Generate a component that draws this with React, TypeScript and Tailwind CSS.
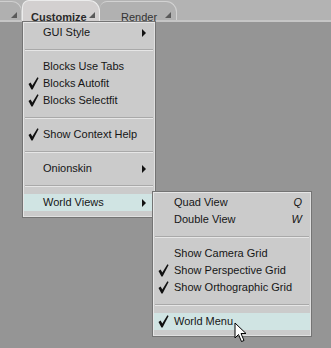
import type { ReactNode } from "react";

type Item =
  | { kind: "item"; label: string; checked?: boolean; sub?: boolean; hot?: boolean; key?: string }
  | { kind: "sep" };

const mainItems: Item[] = [
  { kind: "item", label: "GUI Style", sub: true },
  { kind: "sep" },
  { kind: "item", label: "Blocks Use Tabs" },
  { kind: "item", label: "Blocks Autofit", checked: true },
  { kind: "item", label: "Blocks Selectfit", checked: true },
  { kind: "sep" },
  { kind: "item", label: "Show Context Help", checked: true },
  { kind: "sep" },
  { kind: "item", label: "Onionskin", sub: true },
  { kind: "sep" },
  { kind: "item", label: "World Views", sub: true, hot: true },
];

const viewItems: Item[] = [
  { kind: "item", label: "Quad View", key: "Q" },
  { kind: "item", label: "Double View", key: "W" },
  { kind: "sep" },
  { kind: "item", label: "Show Camera Grid" },
  { kind: "item", label: "Show Perspective Grid", checked: true },
  { kind: "item", label: "Show Orthographic Grid", checked: true },
  { kind: "sep" },
  { kind: "item", label: "World Menu", checked: true, hot: true },
];

function Check() {
  return (
    <svg width="11" height="13" viewBox="0 0 11 13" className="block">
      <path d="M0.5 7 L2.6 5.6 L4.3 8.6 L9.4 0.3 L10.6 1.1 L4.6 12.4 L3.4 12.4 Z" fill="#111" />
    </svg>
  );
}

function Corner() {
  return <div className="h-0 w-0 border-l-[6px] border-l-transparent border-b-[6px] border-b-[#5a5a5a]" />;
}

function Row({ item, textPad }: { item: Item; textPad: string }) {
  if (item.kind === "sep") {
    return (
      <div className="flex h-[17px] items-center px-[2px]">
        <div className="h-[2px] w-full border-t border-t-[#a9a9a9] border-b border-b-[#e6e6e6]" />
      </div>
    );
  }
  return (
    <div
      className={`relative mx-[1px] flex h-[17px] items-center pr-[8px] ${item.hot ? "bg-[#d0e4e3]" : ""}`}
    >
      {item.checked && (
        <div className="absolute left-[4px] top-[2px]">
          <Check />
        </div>
      )}
      <span className={`${textPad} flex-1 whitespace-nowrap text-[11px] text-[#161616]`}>{item.label}</span>
      {item.sub && (
        <div className="h-0 w-0 border-y-[4px] border-y-transparent border-l-[4px] border-l-[#111]" />
      )}
      {item.key && <span className="text-[11px] italic text-[#161616]">{item.key}</span>}
    </div>
  );
}

function Menu({ children, className }: { children: ReactNode; className: string }) {
  return (
    <div
      className={`absolute border border-[#747474] bg-[#cbcbcb] pt-[2px] pb-[6px] shadow-[inset_1px_1px_0_#e6e6e6,inset_-1px_-1px_0_#e0e0e0] ${className}`}
    >
      {children}
    </div>
  );
}

export default function App() {
  return (
    <div
      className="relative h-[348px] w-[331px] overflow-hidden bg-[#959595]"
      style={{ fontFamily: '"Liberation Sans", Arial, sans-serif' }}
    >
      {/* tab strip */}
      <div className="flex h-[22px] items-end border-b-[2px] border-b-[#c6c6c6] bg-[#b3b3b3]">
        <div className="relative h-[19px] w-[22px] rounded-tr-[10px] border-t border-r border-[#cfcfcf] bg-[#b0b0b0]">
          <div className="absolute bottom-[2px] right-[4px]">
            <Corner />
          </div>
        </div>
        <div className="relative z-10 -mb-[2px] h-[22px] w-[78px] rounded-tl-[7px] rounded-tr-[11px] border-t border-l border-r border-[#ececec] bg-[#d3d0d0] pl-[8px] pt-[3px]">
          <span className="text-[11px] font-bold text-[#2a2a2a]">Customize</span>
          <div className="absolute bottom-[4px] right-[4px]">
            <Corner />
          </div>
        </div>
        <div className="relative h-[19px] w-[77px] rounded-tl-[7px] rounded-tr-[11px] border-t border-r border-[#d2d2d2] bg-[#b1b1b1] pl-[21px] pt-[2px]">
          <span className="text-[11px] text-[#333]">Render</span>
          <div className="absolute bottom-[2px] right-[5px]">
            <Corner />
          </div>
        </div>
      </div>

      <Menu className="left-[22px] top-[21px] z-20 w-[134px]">
        {mainItems.map((it, i) => (
          <Row key={i} item={it} textPad="pl-[19px]" />
        ))}
      </Menu>

      <Menu className="left-[152px] top-[191px] z-30 w-[160px]">
        {viewItems.map((it, i) => (
          <Row key={i} item={it} textPad="pl-[20px]" />
        ))}
      </Menu>

      {/* mouse pointer */}
      <svg className="absolute left-[234px] top-[322px] z-40" width="16" height="22" viewBox="0 0 16 22">
        <path
          d="M1 1 L1 16 L4.5 12.5 L7.5 19.5 L10 18.5 L7 11.5 L12 11.5 Z"
          fill="#fff"
          stroke="#000"
          strokeWidth="1"
          strokeLinejoin="miter"
        />
      </svg>
    </div>
  );
}
